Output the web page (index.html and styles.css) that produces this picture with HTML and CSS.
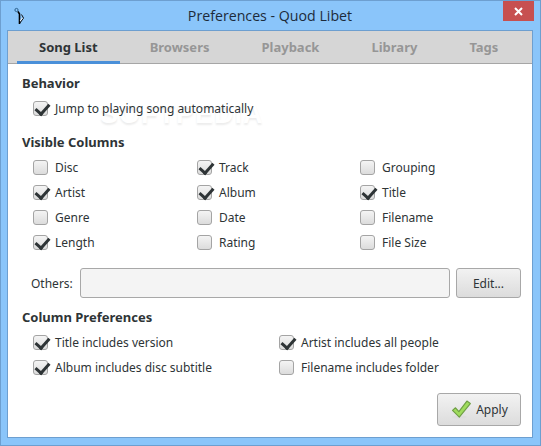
FILE: index.html
```html
<!DOCTYPE html>
<html lang="en">
<head>
    <meta charset="UTF-8">
    <title>Preferences - Quod Libet</title>
    <link rel="stylesheet" href="styles.css">
</head>
<body>
    <div class="window">
        <!-- Title bar -->
        <div class="titlebar">
            <svg class="app-icon" width="12" height="20" viewBox="0 0 12 20">
                <circle cx="2.5" cy="3" r="1.6" fill="none" stroke="#2b5f8a" stroke-width="1"/>
                <path d="M4 4.5 L5.5 7 L5.5 17" fill="none" stroke="#000" stroke-width="1.6"/>
                <path d="M6 16 L9.5 11 L7.5 7.5" fill="none" stroke="#111" stroke-width="1"/>
                <path d="M6 14 L8.5 11" stroke="#fff" stroke-width="1"/>
            </svg>
            <span class="title">Preferences - Quod Libet</span>
            <div class="close">
                <svg width="9" height="9" viewBox="0 0 9 9"><path d="M1 1 L8 8 M8 1 L1 8" stroke="#fff" stroke-width="2"/></svg>
            </div>
        </div>

        <div class="content">
            <div class="tabs">
                <div class="tab active">Song List</div>
                <div class="tab">Browsers</div>
                <div class="tab">Playback</div>
                <div class="tab">Library</div>
                <div class="tab">Tags</div>
            </div>

            <div class="page">
                <div class="watermark">SOFTPEDIA</div>

                <h2>Behavior</h2>
                <div class="indent">
                    <label class="check on"><span class="box"></span>Jump to playing song automatically</label>
                </div>

                <h2 class="next">Visible Columns</h2>
                <div class="indent columns">
                    <label class="check"><span class="box"></span>Disc</label>
                    <label class="check on"><span class="box"></span>Track</label>
                    <label class="check"><span class="box"></span>Grouping</label>
                    <label class="check on"><span class="box"></span>Artist</label>
                    <label class="check on"><span class="box"></span>Album</label>
                    <label class="check on"><span class="box"></span>Title</label>
                    <label class="check"><span class="box"></span>Genre</label>
                    <label class="check"><span class="box"></span>Date</label>
                    <label class="check"><span class="box"></span>Filename</label>
                    <label class="check on"><span class="box"></span>Length</label>
                    <label class="check"><span class="box"></span>Rating</label>
                    <label class="check"><span class="box"></span>File Size</label>
                </div>

                <div class="others">
                    <span class="others-label">Others:</span>
                    <div class="input"></div>
                    <button class="btn edit">Edit...</button>
                </div>

                <h2 class="prefs">Column Preferences</h2>
                <div class="indent prefs-grid">
                    <label class="check on"><span class="box"></span>Title includes version</label>
                    <label class="check on"><span class="box"></span>Artist includes all people</label>
                    <label class="check on"><span class="box"></span>Album includes disc subtitle</label>
                    <label class="check"><span class="box"></span>Filename includes folder</label>
                </div>

                <div class="actions">
                    <button class="btn apply">
                        <svg width="22" height="23" viewBox="0 0 26 26">
                            <ellipse cx="11" cy="22" rx="9" ry="2" fill="#ddd"/>
                            <path d="M3 14 L6.5 11 L10.5 15.5 L20 3 L24 6 L11 22 Z" fill="#9fdc5c" stroke="#6f9f45" stroke-width="1.4" stroke-linejoin="round"/>
                        </svg>
                        Apply
                    </button>
                </div>
            </div>
        </div>
    </div>
</body>
</html>
```

FILE: styles.css
```css
/* Reset */
* {
    margin: 0;
    padding: 0;
    box-sizing: border-box;
}

body {
    width: 541px;
    height: 446px;
    overflow: hidden;
    font-family: 'Noto Sans', 'Open Sans', sans-serif;
    font-size: 12px;
    color: #2e3436;
}

/* Window frame */
.window {
    width: 541px;
    height: 446px;
    background-color: #8ac5fa;
    border: 1px solid #6d9fd0;
    padding: 0 7px 7px 6px;
    display: flex;
    flex-direction: column;
}

.titlebar {
    height: 29px;
    flex: none;
    display: flex;
    align-items: center;
    justify-content: center;
    position: relative;
}

.title {
    font-family: 'Open Sans', sans-serif;
    font-size: 14.2px;
    color: #1d2b3a;
}

.app-icon {
    position: absolute;
    left: 7px;
    top: 6px;
}

.close {
    position: absolute;
    right: -1px;
    top: 0;
    width: 31px;
    height: 20px;
    background-color: #c75050;
    display: flex;
    align-items: center;
    justify-content: center;
}

/* Main area */
.content {
    flex: 1;
    background-color: #fff;
    border: 1px solid #6d9fd0;
    display: flex;
    flex-direction: column;
}

.tabs {
    height: 33px;
    flex: none;
    display: flex;
    gap: 8px;
    padding: 0 9px;
    background-color: #d6d6d6;
    border-bottom: 1px solid #a6a6a6;
}

.tab {
    padding: 0 22px;
    text-align: center;
    line-height: 32px;
    font-weight: 700;
    font-size: 13px;
    color: #969696;
}

.tab.active {
    color: #2e3436;
    height: 33px;
    border-bottom: 3px solid #4a90d9;
}

.page {
    flex: 1;
    position: relative;
    padding: 10px 11px 0 14px;
}

.watermark {
    position: absolute;
    left: 92px;
    top: 35px;
    font-family: 'Liberation Sans', sans-serif;
    font-size: 27px;
    font-weight: 700;
    letter-spacing: 1px;
    color: #fff;
    text-shadow: 0 2px 2px #ececec;
}

h2 {
    font-size: 13px;
    font-weight: 700;
    line-height: 18px;
}

h2.next {
    margin-top: 12px;
}

h2.prefs {
    margin-top: 10px;
}

.indent {
    padding-left: 11px;
    margin-top: 4px;
    position: relative;
}

/* Checkboxes */
.check {
    display: flex;
    align-items: center;
    gap: 7px;
    height: 25px;
    line-height: 25px;
}

.box {
    position: relative;
    width: 15px;
    height: 15px;
    flex: none;
    border: 1px solid #a4a4a4;
    border-radius: 3px;
    background: linear-gradient(#f4f4f4, #dcdcdc);
}

.check.on .box::after {
    content: '';
    position: absolute;
    left: 4px;
    top: -1px;
    width: 6px;
    height: 11px;
    border: solid #2e3436;
    border-width: 0 3px 3px 0;
    transform: rotate(42deg);
}

.columns {
    display: grid;
    grid-template-columns: 164px 163px 1fr;
}

.prefs-grid {
    display: grid;
    grid-template-columns: 246px 1fr;
}

/* Others row */
.others {
    display: flex;
    align-items: center;
    margin-top: 13px;
    height: 30px;
}

.others-label {
    width: 58px;
    padding-left: 9px;
}

.input {
    flex: 1;
    height: 30px;
    background-color: #f4f4f4;
    border: 1px solid #a8a8a8;
    border-radius: 3px;
    margin-right: 6px;
}

.btn {
    font-family: 'Noto Sans', 'Open Sans', sans-serif;
    font-size: 12px;
    color: #2e3436;
    border: 1px solid #a8a8a8;
    border-radius: 3px;
    background: linear-gradient(#f2f2f2, #dcdcdc);
}

.edit {
    width: 65px;
    height: 30px;
}

.actions {
    display: flex;
    justify-content: flex-end;
    margin-top: 13px;
}

.apply {
    width: 84px;
    height: 33px;
    display: flex;
    align-items: center;
    justify-content: center;
    gap: 4px;
}
```
